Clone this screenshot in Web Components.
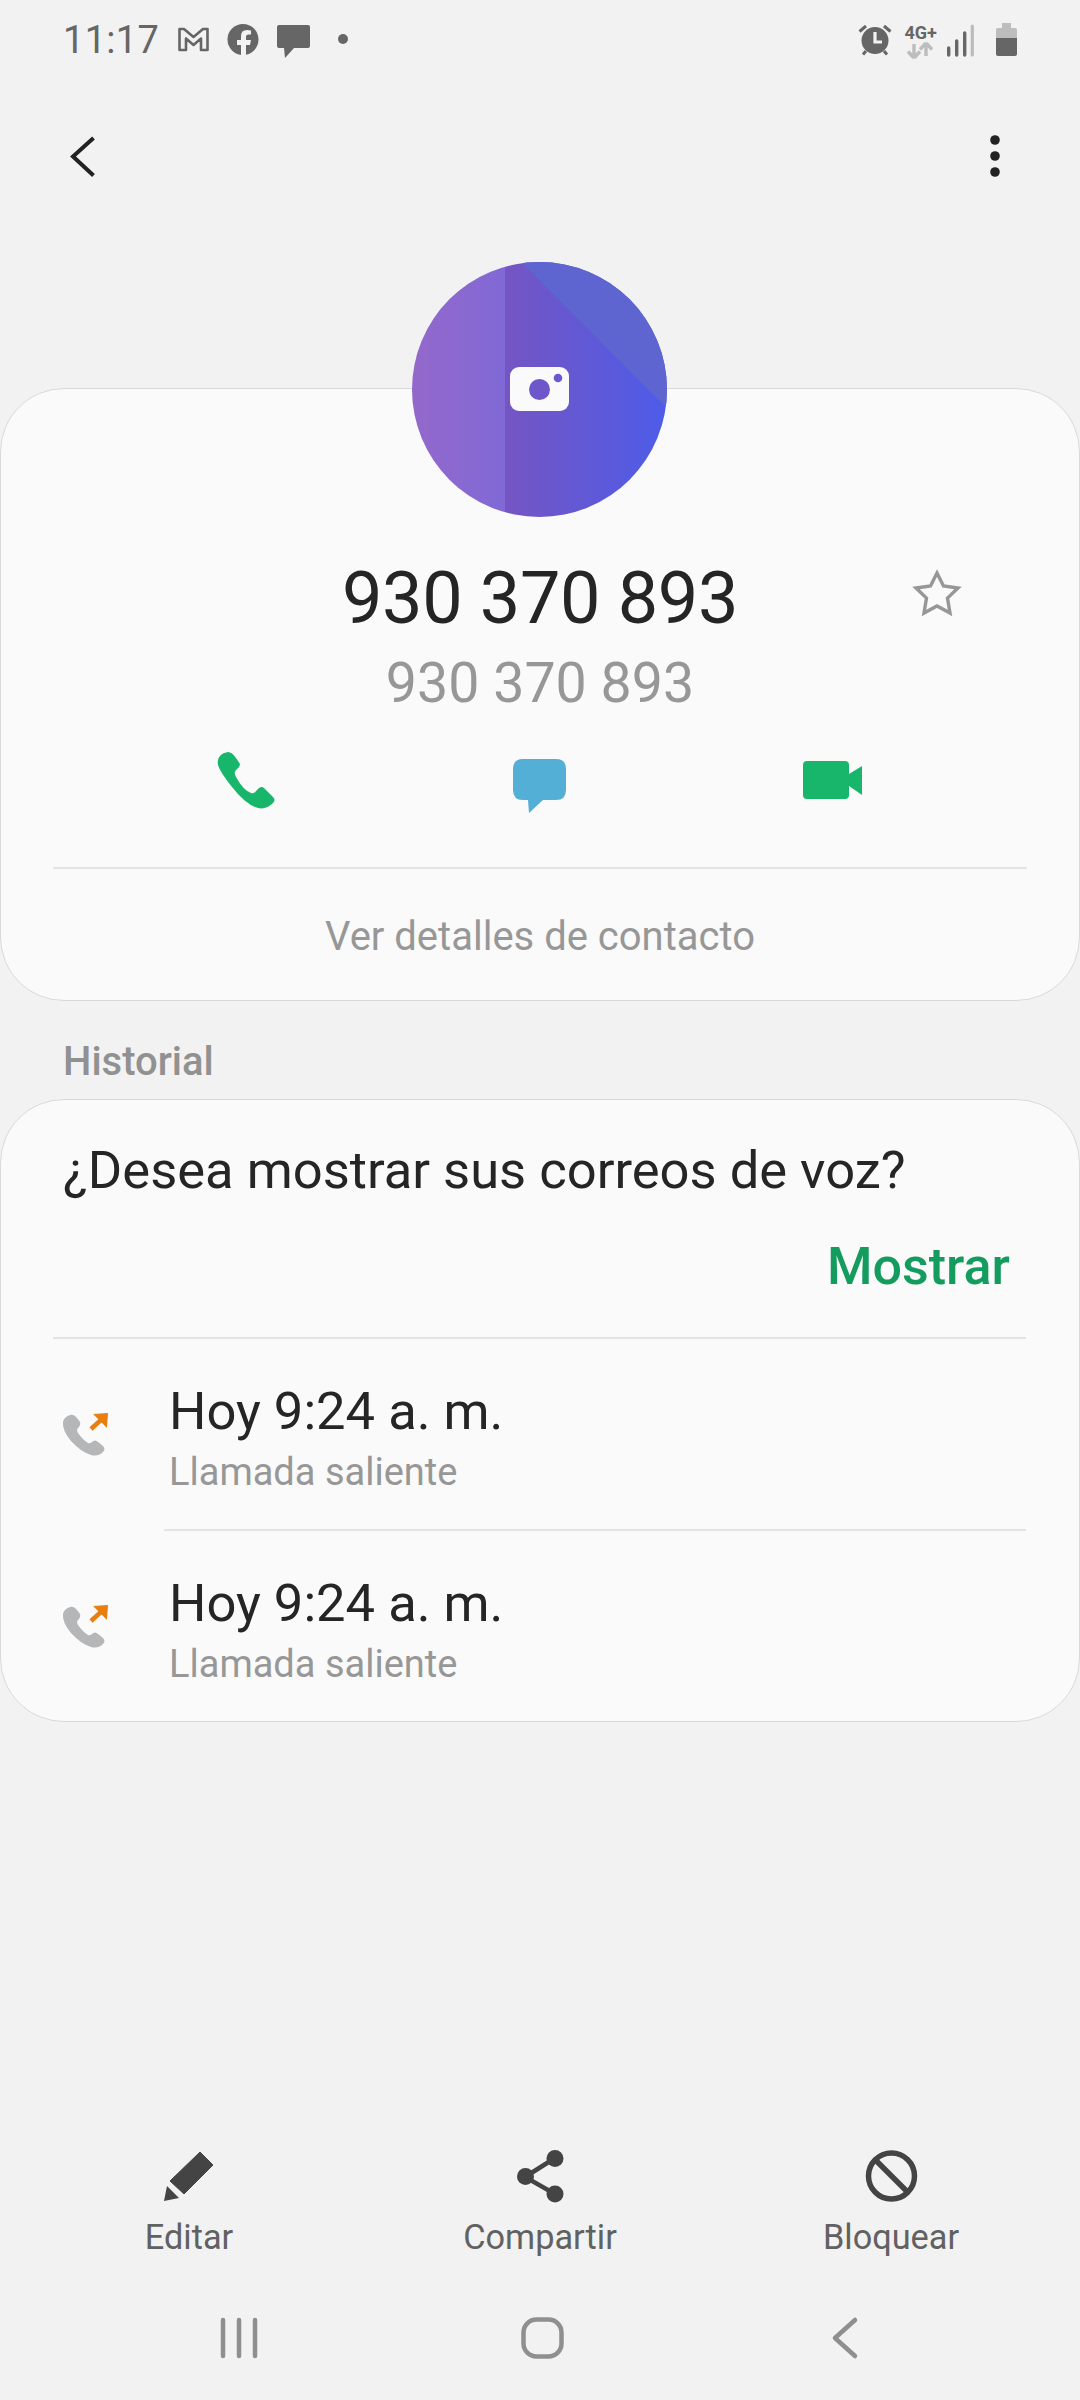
<!DOCTYPE html>
<html lang="es"><head><meta charset="utf-8"><title>Contacto</title>
<style>
html,body{margin:0;padding:0;background:#f2f2f2}
body{font-family:Roboto,"Liberation Sans",sans-serif;width:1080px;height:2400px;overflow:hidden}
</style></head><body>
<contact-screen>
  <status-bar time="11:17"></status-bar>
  <app-toolbar></app-toolbar>
  <contact-card number="930 370 893" link="Ver detalles de contacto"></contact-card>
  <section-label>Historial</section-label>
  <history-card question="¿Desea mostrar sus correos de voz?" action="Mostrar">
    <call-row when="Hoy 9:24 a. m." kind="Llamada saliente"></call-row>
    <call-row class="second" when="Hoy 9:24 a. m." kind="Llamada saliente"></call-row>
  </history-card>
  <bottom-actions></bottom-actions>
  <nav-bar></nav-bar>
</contact-screen>
<script>
function def(name, html){
  customElements.define(name, class extends HTMLElement{
    connectedCallback(){
      if(this.shadowRoot) return;
      const r=this.attachShadow({mode:'open'});
      r.innerHTML=typeof html==='function'?html(this):html;
    }
  });
}
def('contact-screen',`<style>:host{display:flex;flex-direction:column;width:1080px;height:2400px;color:#222}
::slotted(bottom-actions){margin-top:auto}</style><slot></slot>`);

def('status-bar',h=>`<style>
:host{display:flex;height:80px;align-items:center;padding:0 62px 0 63px;box-sizing:border-box;color:#666}
.t{font:400 38px/40px Roboto,sans-serif;letter-spacing:.3px;margin-right:13px;width:100px}
svg{display:block;height:40px;flex:none}
.r{margin-left:auto;display:flex}
</style>
<span class="t">${h.getAttribute('time')}</span>
<svg width="36" viewBox="175 20 36 40"><path d="M178.5 29H183L192.5 37 202 29H206.5V50H200V38.500L192.500 45 185 38.500V50H178.500Z" fill="none" stroke="#666" stroke-width="2.600" stroke-linejoin="round"/></svg>
<svg style="margin-left:14px" width="34" viewBox="225 20 34 40"><circle cx="242" cy="39.500" r="15.500" fill="#666"/><path d="M245 56V45H249L250 40H245V37Q245 34.500 247.500 34.500H250V30.500Q248 30 246 30 240 30 240 36V40H236V45H240V56Z" fill="#f2f2f2"/></svg>
<svg style="margin-left:16px" width="35" viewBox="275 20 35 40"><path d="M278 25H307Q309 25 309 27V46Q309 48 307 48H293L284 58 283 48H278Q276 48 276 46V27Q276 25 278 25Z" fill="#666"/></svg>
<svg style="margin-left:26px" width="12" viewBox="336 20 12 40"><circle cx="342" cy="39" r="5" fill="#666"/></svg>
<div class="r">
<svg width="38" viewBox="856 20 38 40"><circle cx="875" cy="40.500" r="13.500" fill="#666"/><path d="M875 32V42H882" fill="none" stroke="#f2f2f2" stroke-width="3.200"/><path d="M859.500 31.500L866 26M890.500 31.500L884 26M863 54.500L866 51M887 54.500L884 51" stroke="#666" stroke-width="3"/></svg>
<svg style="margin-left:10px" width="34" viewBox="905 20 34 40"><text x="905.500" y="39" font-family="Roboto,sans-serif" font-weight="700" font-size="18" fill="#666">4G+</text><path d="M915 58L909 51.500M915 58L921 51.500M915 57V44M927 43L921 49.500M927 43L933 49.500M927 44V56" stroke="#bdbdbd" stroke-width="3.400" fill="none"/></svg>
<svg style="margin-left:9px" width="28" viewBox="948 20 28 40"><path d="M949.700 48V55M957.700 41V55M965.700 33V55" stroke="#666" stroke-width="3.400" stroke-linecap="round"/><path d="M973.300 26V55" stroke="#bbb" stroke-width="3.200" stroke-linecap="round"/></svg>
<svg style="margin-left:21px" width="22" viewBox="997 20 22 40"><path d="M1003 23H1012V28H1016Q1018 28 1018 30V38H997V30Q997 28 999 28H1003Z" fill="#bdbdbd"/><path d="M997 38H1018V54Q1018 56 1016 56H999Q997 56 997 54Z" fill="#666"/></svg>
</div>`);

def('app-toolbar',`<style>:host{display:flex;justify-content:space-between;height:152px;align-items:center;padding:0 75px 0 65px;box-sizing:border-box}svg{display:block}</style>
<svg width="36" height="52" viewBox="65 130 36 52"><path d="M93.500 138L73 156.500 93.500 175.500" fill="none" stroke="#222" stroke-width="4"/></svg>
<svg width="20" height="52" viewBox="985 130 20 52"><circle cx="995" cy="140" r="4.800" fill="#222"/><circle cx="995" cy="156" r="4.800" fill="#222"/><circle cx="995" cy="172" r="4.800" fill="#222"/></svg>`);

def('contact-avatar',`<style>:host{display:block;width:255px;height:255px}svg{display:block}</style>
<svg width="255" height="255" viewBox="412 262 255 255"><defs>
<clipPath id="c"><circle cx="539.500" cy="389.500" r="127.500"/></clipPath>
<linearGradient id="a" gradientUnits="userSpaceOnUse" x1="412" x2="505" y1="0" y2="0"><stop offset="0" stop-color="#9468cb"/><stop offset="1" stop-color="#8069d6"/></linearGradient>
<linearGradient id="b" gradientUnits="userSpaceOnUse" x1="505" x2="667" y1="0" y2="0"><stop offset="0" stop-color="#7555c3"/><stop offset="1" stop-color="#4d5ce9"/></linearGradient>
</defs><g clip-path="url(#c)">
<rect x="412" y="262" width="93" height="255" fill="url(#a)"/>
<rect x="505" y="262" width="162" height="255" fill="url(#b)"/>
<path d="M521 262L667 408V262Z" fill="#5e64d0"/></g>
<rect x="510" y="367" width="59" height="44" rx="9" fill="#fafafa"/>
<circle cx="539.500" cy="389.500" r="10.500" fill="#6e57c8"/><circle cx="558" cy="378" r="4.300" fill="#6a58cf"/></svg>`);

def('contact-card',h=>`<style>
:host{display:block;margin-top:156px;height:613px;box-sizing:border-box;background:#fafafa;border:1px solid #d9d9d9;border-radius:64px}
contact-avatar{margin:-127px 0 0 411px}
.row{display:grid;grid-template-columns:1fr auto 1fr;align-items:center;margin-top:37px}
.n{grid-column:2;font:400 72px/90px Roboto,sans-serif;letter-spacing:-.35px;color:#252525}
.star{display:block;margin-left:172px;align-self:start;margin-top:12px}
.s{text-align:center;font:400 55.500px/62px Roboto,sans-serif;color:#979797;margin-top:9px}
.acts{display:grid;grid-template-columns:repeat(3,293px);justify-content:center;justify-items:center;margin-top:30px}
.acts svg{display:block}
hr{border:0;height:2px;background:#e4e4e4;margin:50px 52px 0 52px}
.l{text-align:center;font:400 40px/44px Roboto,sans-serif;color:#979797;padding-top:46px}
</style>
<contact-avatar></contact-avatar>
<div class="row"><div class="n">${h.getAttribute('number')}</div>
<svg class="star" width="55" height="55" viewBox="910 567 55 55"><path d="M937 574L943.500 587 958 589 947.500 599 950 614 937 607 924 614 926.500 599 916 589 930.500 587Z" fill="none" stroke="#979797" stroke-width="3.400" stroke-linejoin="miter"/></svg></div>
<div class="s">${h.getAttribute('number')}</div>
<div class="acts">
<svg width="74" height="72" viewBox="210 745 74 72"><path d="M228 752Q232 752 236 758L240 764Q240 767 237 769 233 772 236 777 243 790 251 793 254 794 256 791L259 788Q262 786 264 788L273 797Q276 800 273 803 266 810 258 808 246 805 232 787 220 772 218 765 216 754 228 752Z" fill="#17b66b"/></svg>
<svg width="74" height="72" viewBox="503 745 74 72"><path d="M523 759H556Q566 759 566 769V790Q566 800 556 800H543L529 813 528 800H523Q513 800 513 790V769Q513 759 523 759Z" fill="#54afd6"/></svg>
<svg width="74" height="72" viewBox="796 745 74 72"><rect x="803" y="761" width="46" height="38" rx="4" fill="#17b66b"/><path d="M849 774L862 766V795L849 786Z" fill="#17b66b"/></svg>
</div>
<hr>
<div class="l">${h.getAttribute('link')}</div>`);

def('section-label',`<style>:host{display:block;font:500 40px/44px Roboto,sans-serif;color:#919191;padding:39px 63px 15px}</style><slot></slot>`);

def('history-card',h=>`<style>
:host{display:block;height:623px;box-sizing:border-box;background:#fafafa;border:1px solid #d9d9d9;border-radius:64px}
.q{font:400 52.500px/60px Roboto,sans-serif;color:#252525;padding:40px 0 0 62px}
.a{font:500 52px/60px Roboto,sans-serif;color:#149c5f;text-align:right;padding-right:69px;margin-top:37px}
hr{border:0;height:2px;background:#e4e4e4;margin:40px 53px 0 52px}
</style>
<div class="q">${h.getAttribute('question')}</div>
<div class="a">${h.getAttribute('action')}</div>
<hr><slot></slot>`);

def('call-row',h=>`<style>
:host{display:grid;grid-template-columns:auto 1fr;grid-template-rows:auto 1fr;height:190px;padding-left:57px;box-sizing:border-box}
:host(.second){height:192px}
:host(.second)::before{content:"";grid-column:1/-1;height:2px;background:#e4e4e4;margin:0 53px 0 106px}
svg{display:block;margin-top:67px}
.t{margin-left:57px}
.w{font:400 52.500px/56px Roboto,sans-serif;color:#252525;padding-top:44px}
.k{font:400 38px/44px Roboto,sans-serif;color:#979797;margin-top:11px}
</style>
<svg width="54" height="56" viewBox="58 1405 54 56"><path d="M70 1414Q74 1413 77 1417L80 1421Q81 1424 78 1427 76 1429 78 1432 83 1439 88 1442 90 1443 92 1441 95 1438 98 1441L103 1445Q106 1448 103 1451 98 1456 91 1454 81 1451 71 1440 62 1429 63 1421 64 1416 70 1414Z" fill="#b5b6b8"/><path d="M91 1428L102 1418" stroke="#e87f12" stroke-width="4.500"/><path d="M93 1413L108 1412 107 1427Z" fill="#e87f12"/></svg>
<div class="t"><div class="w">${h.getAttribute('when')}</div><div class="k">${h.getAttribute('kind')}</div></div>`);

def('action-item',h=>`<style>:host{display:flex;flex-direction:column;align-items:center;font:400 34.300px/44px Roboto,sans-serif;color:#616161}
::slotted(svg){display:block}.l{margin-top:11px}</style><slot name="i"></slot><div class="l">${h.getAttribute('label')}</div>`);

def('bottom-actions',`<style>:host{display:grid;grid-template-columns:repeat(3,351px);justify-content:center}svg{display:block}</style>
<action-item label="Editar"><svg slot="i" width="60" height="56" viewBox="159 2148 60 56"><path d="M200 2152L213 2165 184 2194 170 2181Z" fill="#444" stroke="#444" stroke-width="1" stroke-linejoin="round"/><path d="M167 2186L179 2198 164 2201Z" fill="#444"/></svg></action-item>
<action-item label="Compartir"><svg slot="i" width="60" height="56" viewBox="510 2148 60 56"><path d="M555 2158L525 2177 555 2194" fill="none" stroke="#444" stroke-width="4.500"/><circle cx="555" cy="2158.500" r="8.500" fill="#444"/><circle cx="525.500" cy="2176.500" r="8.500" fill="#444"/><circle cx="555" cy="2194" r="8.500" fill="#444"/></svg></action-item>
<action-item label="Bloquear"><svg slot="i" width="60" height="56" viewBox="861 2148 60 56"><circle cx="891.500" cy="2176" r="23" fill="none" stroke="#444" stroke-width="5.500"/><path d="M875 2159.500L908 2192.500" stroke="#444" stroke-width="5.500"/></svg></action-item>`);

def('nav-bar',`<style>:host{display:grid;grid-template-columns:repeat(3,303px);justify-content:center;justify-items:center;align-items:start;height:100px;margin-top:41px;padding:8px 0 0 4px;box-sizing:border-box}svg{display:block}</style>
<svg width="60" height="60" viewBox="210 2308 60 60"><path d="M224 2320V2356M240 2320V2356M256 2320V2356" stroke="#8f8f8f" stroke-width="4.500" stroke-linecap="round"/></svg>
<svg width="60" height="60" viewBox="512 2308 60 60"><rect x="523.500" y="2319.500" width="38" height="37" rx="13" fill="none" stroke="#8f8f8f" stroke-width="4.500"/></svg>
<svg width="60" height="60" viewBox="815 2308 60 60"><path d="M855 2320L835 2338 855 2356" fill="none" stroke="#8f8f8f" stroke-width="4.500" stroke-linecap="round" stroke-linejoin="round"/></svg>`);
</script>
</body></html>
